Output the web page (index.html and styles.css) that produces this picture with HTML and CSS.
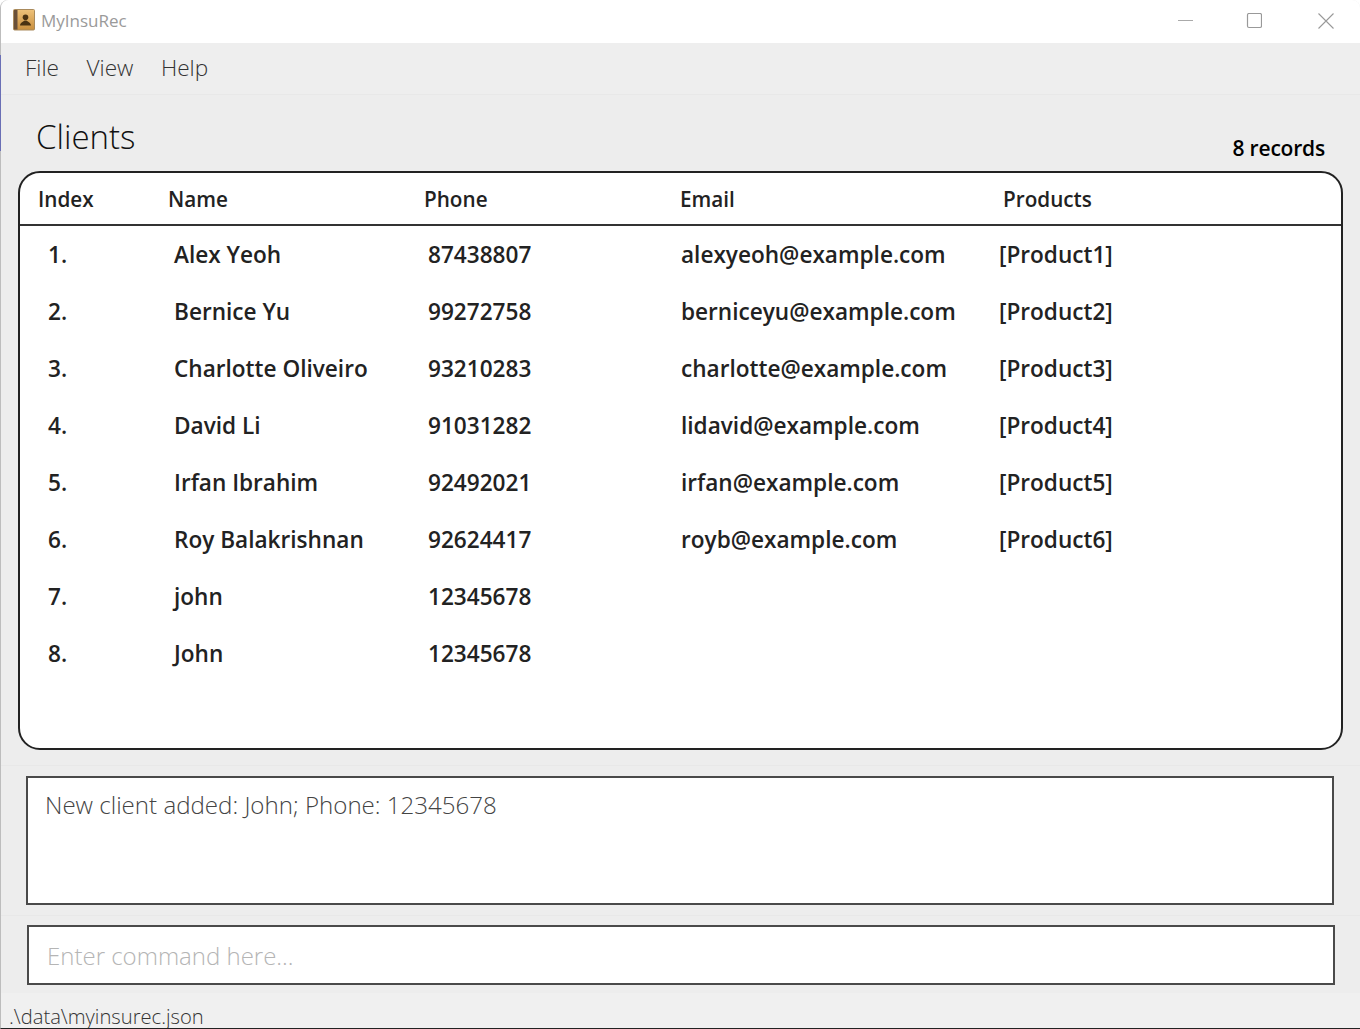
FILE: index.html
```html
<!DOCTYPE html>
<html lang="en">
<head>
<meta charset="utf-8">
<title>MyInsuRec</title>
<link rel="stylesheet" href="styles.css">
</head>
<body>
<div class="window">
  <div class="edge-tint"></div>
  <header class="titlebar">
    <div class="app">
      <svg class="app-icon" width="22" height="22" viewBox="0 0 22 22">
        <defs>
          <linearGradient id="cover" x1="0" y1="0" x2="0" y2="1">
            <stop offset="0" stop-color="#eec27a"/>
            <stop offset="1" stop-color="#c98f3e"/>
          </linearGradient>
        </defs>
        <rect x="0.5" y="0.5" width="21" height="20.5" rx="1" fill="url(#cover)" stroke="#a98a5c"/>
        <rect x="1" y="1" width="3.5" height="19.5" fill="#6a5038"/>
        <circle cx="12.5" cy="8.2" r="2.8" fill="#4a3212"/>
        <path d="M7 16.5 C7.5 13 10.5 12.8 11.5 11.5 H13.5 C14.5 12.8 17.5 13 18 16.5 Z" fill="#4a3212"/>
      </svg>
      <span class="app-name">MyInsuRec</span>
    </div>
    <div class="controls">
      <svg class="ctl-min" width="16" height="16" viewBox="0 0 16 16"><path d="M0 7.5H15" stroke="#aaa" fill="none"/></svg>
      <svg width="16" height="16" viewBox="0 0 16 16"><rect x="1.5" y="0.5" width="14" height="14" rx="1.5" stroke="#999" stroke-width="1.2" fill="none"/></svg>
      <svg width="16" height="16" viewBox="0 0 16 16"><path d="M0.5 0.5L15.5 15.5M15.5 0.5L0.5 15.5" stroke="#999" stroke-width="1.1" fill="none"/></svg>
    </div>
  </header>
  <nav class="menubar">
    <span>File</span><span>View</span><span>Help</span>
  </nav>
  <main class="clients">
    <div class="clients-head">
      <h1>Clients</h1>
      <span class="count">8 records</span>
    </div>
    <section class="card">
      <div class="thead">
        <span class="c1">Index</span><span class="c2">Name</span><span class="c3">Phone</span><span class="c4">Email</span><span class="c5">Products</span>
      </div>
      <div class="tbody">
        <div class="row"><span>1.</span><span>Alex Yeoh</span><span>87438807</span><span>alexyeoh@example.com</span><span>[Product1]</span></div>
        <div class="row"><span>2.</span><span>Bernice Yu</span><span>99272758</span><span>berniceyu@example.com</span><span>[Product2]</span></div>
        <div class="row"><span>3.</span><span>Charlotte Oliveiro</span><span>93210283</span><span>charlotte@example.com</span><span>[Product3]</span></div>
        <div class="row"><span>4.</span><span>David Li</span><span>91031282</span><span>lidavid@example.com</span><span>[Product4]</span></div>
        <div class="row"><span>5.</span><span>Irfan Ibrahim</span><span>92492021</span><span>irfan@example.com</span><span>[Product5]</span></div>
        <div class="row"><span>6.</span><span>Roy Balakrishnan</span><span>92624417</span><span>royb@example.com</span><span>[Product6]</span></div>
        <div class="row"><span>7.</span><span>john</span><span>12345678</span><span></span><span></span></div>
        <div class="row"><span>8.</span><span>John</span><span>12345678</span><span></span><span></span></div>
      </div>
    </section>
  </main>
  <section class="result-pane">
    <div class="result">New client added: John; Phone: 12345678</div>
  </section>
  <section class="command-pane">
    <div class="command">Enter command here...</div>
  </section>
  <footer class="status">.\data\myinsurec.json</footer>
</div>
</body>
</html>
```
FILE: styles.css
```css
* { box-sizing: border-box; }
html, body { margin: 0; height: 100%; }
body {
  background: #ffffff;
  font-family: "Open Sans", "Noto Sans", sans-serif;
  overflow: hidden;
}
.window {
  position: relative;
  width: 1360px;
  height: 1029px;
  display: flex;
  flex-direction: column;
  background: #ededed;
  border-left: 1px solid #bdbdbd;
  border-bottom: 1px solid #222;
  border-radius: 8px 8px 0 0;
}
.edge-tint {
  position: absolute;
  left: -1px;
  top: 55px;
  width: 1px;
  height: 96px;
  background: #6a6fb5;
}
.titlebar {
  height: 43px;
  flex: none;
  background: #fff;
  border-radius: 8px 8px 0 0;
  display: flex;
  justify-content: space-between;
  align-items: center;
  padding: 0 26px 2px 12px;
}
.app { display: flex; align-items: center; gap: 6px; }
.app-icon { display: block; margin-top: -1px; }
.app-name { font-size: 17px; color: #9a9a9a; }
.controls { display: flex; gap: 56px; align-items: center; margin-top: 1px; }
.ctl-min { margin-right: -4px; }
.menubar {
  height: 52px;
  flex: none;
  background: #eeeeee;
  border-bottom: 1px solid #e8e8e8;
  display: flex;
  align-items: center;
  gap: 27.5px;
  padding: 0 0 3px 24px;
  font-size: 22.6px;
  font-weight: 300;
  color: #333;
}
.clients {
  height: 671px;
  flex: none;
  padding: 0 17px 0 17px;
  border-bottom: 1px solid #e8e8e8;
}
.clients-head {
  height: 76px;
  display: flex;
  justify-content: space-between;
  align-items: flex-end;
  padding: 0 18px 0 18px;
}
.clients-head h1 {
  margin: 0 0 11px;
  font-size: 33px;
  line-height: 46px;
  font-weight: 300;
  color: #111;
}
.count {
  font-size: 21px;
  font-weight: 600;
  line-height: 28px;
  color: #000;
  margin: 0 0 9px;
  letter-spacing: -0.2px;
}
.card {
  height: 579px;
  background: #fff;
  border: 2px solid #222;
  border-radius: 22px;
  overflow: hidden;
}
.thead {
  height: 53px;
  border-bottom: 2px solid #333;
  display: grid;
  grid-template-columns: 130px 256px 256px 323px 1fr;
  align-items: center;
  padding-left: 18px;
  padding-top: 1px;
  font-size: 20.7px;
  font-weight: 600;
  color: #222;
}
.row {
  height: 57px;
  display: grid;
  grid-template-columns: 126px 254px 253px 318px 1fr;
  align-items: center;
  padding-left: 28px;
  font-size: 22.6px;
  font-weight: 600;
  color: #222;
}
.result-pane {
  height: 150px;
  flex: none;
  padding: 10px 26px 0 25px;
  border-bottom: 1px solid #e8e8e8;
}
.result {
  height: 129px;
  background: #fff;
  border: 2px solid #4a4a4a;
  padding: 10px 17px;
  font-size: 24.1px;
  font-weight: 300;
  line-height: 33px;
  color: #444;
}
.command-pane {
  height: 77px;
  flex: none;
  padding: 9px 25px 0 26px;
}
.command {
  height: 60px;
  background: #fff;
  border: 2px solid #4a4a4a;
  padding: 0 18px;
  font-size: 24px;
  font-weight: 300;
  line-height: 58px;
  color: #b5b5b5;
}
.status {
  flex: 1;
  background: #f0f0f0;
  padding: 9px 0 0 8px;
  font-size: 20.2px;
  font-weight: 300;
  line-height: 28px;
  color: #333;
  overflow: hidden;
}
```
